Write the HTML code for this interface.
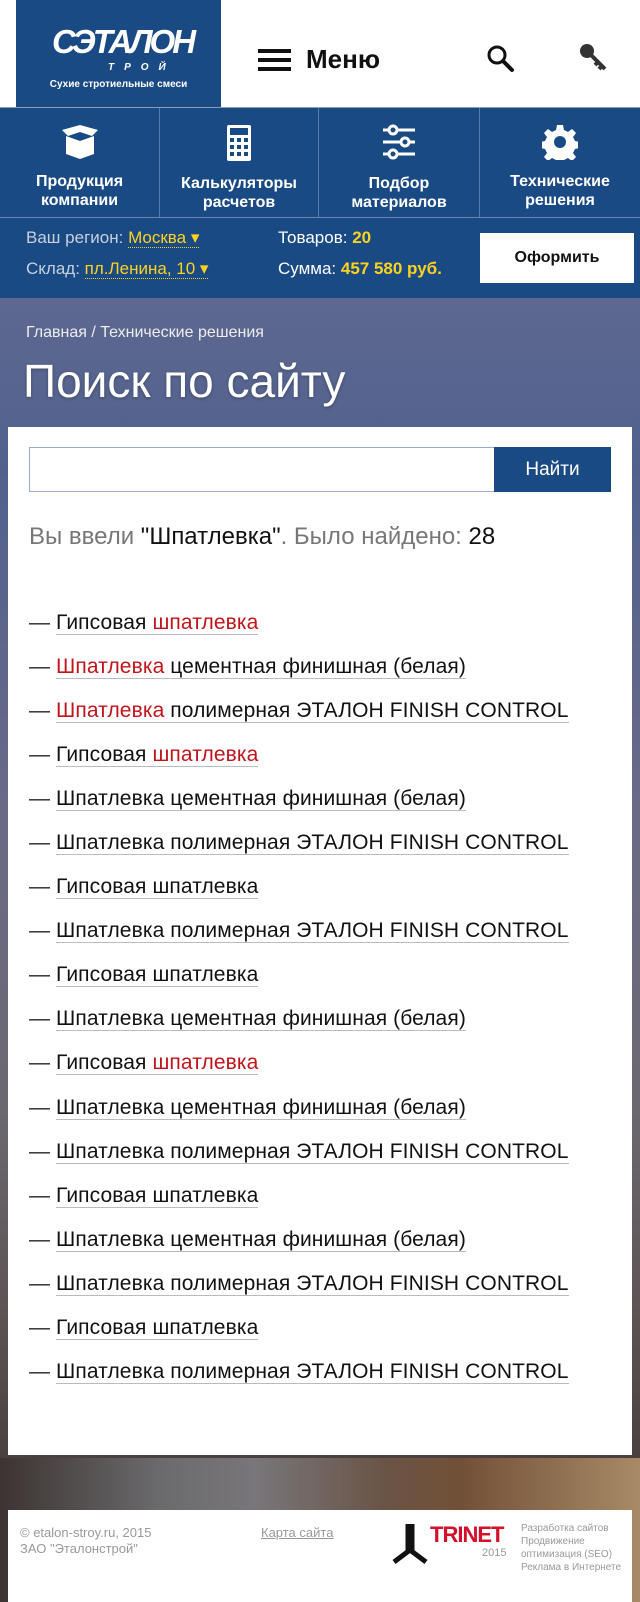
<!DOCTYPE html>
<html><head><meta charset="utf-8"><style>
*{margin:0;padding:0;box-sizing:border-box}
body{width:640px;height:1602px;font-family:"Liberation Sans",sans-serif;position:relative;overflow:hidden;
background:linear-gradient(90deg,#3c3432 0%,#6b6a6c 25%,#78767a 40%,#6a5446 60%,#725037 72%,#a88a66 100%)}
.bg{position:absolute;left:0;top:298px;width:640px;height:1160px;background:linear-gradient(180deg,#5d6890 0%,#51618e 15%,#6a6a86 45%,#6c6870 70%,#5a5050 90%,#4a4040 100%)}
.hdr{position:absolute;left:0;top:0;width:640px;height:107px;background:#fff}
.logo{position:absolute;left:16px;top:0;width:205px;height:107px;background:#1a4a84;color:#fff;text-align:center;overflow:hidden}
.abs{position:absolute}
.nav{position:absolute;left:0;top:107px;width:640px;height:110px;background:#1a4a84;border-top:1px solid #8a9ab8;display:flex}
.nav div{border-right:1px solid #5a7aa8;color:#fff;font-weight:bold;font-size:16px;text-align:center;line-height:19px;position:relative}
.nav svg{display:block;margin:16px auto 12px}
.info{position:absolute;left:0;top:217px;width:640px;height:81px;background:#1a4a84;border-top:1px solid #6a86b0;color:#fff;font-size:17px}
.y{color:#ffd21e;border-bottom:1px dotted #ffd21e}
.card{position:absolute;left:8px;top:427px;width:624px;height:1028px;background:#fff}
ul{list-style:none;position:absolute;left:29px;top:611px}
li{height:44.05px;font-size:21px;color:#222;white-space:nowrap;letter-spacing:0.1px}
li a{color:#111;text-decoration:none;border-bottom:1px solid #bbb}
.r{color:#c0141b}
.ft{position:absolute;left:8px;top:1510px;width:624px;height:92px;background:#fff;color:#999;font-size:13px}
</style></head><body>
<div class="bg"></div>
<div class="hdr">
<div class="logo">
<div class="abs" style="left:36px;top:24px;font-size:33px;font-weight:bold;font-style:italic;letter-spacing:-3px;line-height:36px">СЭТАЛОН</div>
<div class="abs" style="left:92px;top:62px;font-size:10px;font-style:italic;letter-spacing:10px;font-weight:bold">ТРОЙ</div>
<div class="abs" style="left:0;width:205px;top:79px;font-size:10px;font-weight:bold">Сухие стротиельные смеси</div>
</div>
<div class="abs" style="left:258px;top:49px;width:33px;height:4px;background:#111;box-shadow:0 9px 0 #111,0 18px 0 #111"></div>
<div class="abs" style="left:306px;top:44px;font-size:26px;font-weight:bold;color:#111">Меню</div>
<svg class="abs" style="left:486px;top:44px" width="30" height="30" viewBox="0 0 30 30"><circle cx="11" cy="11" r="8" fill="none" stroke="#111" stroke-width="3"/><path d="M17 17l9 9" stroke="#111" stroke-width="4" stroke-linecap="round"/></svg>
<svg class="abs" style="left:578px;top:42px" width="30" height="30" viewBox="0 0 30 30"><circle cx="9" cy="9" r="7" fill="#333"/><path d="M13 13l14 14M20 20l-3 3M24 24l-3 3" stroke="#333" stroke-width="4"/></svg>
</div>
<div class="nav">
<div style="width:160px"><svg width="44" height="36" viewBox="0 0 44 36"><path d="M4 6l18-5 18 5-6 6-12-4-12 4zM8 12l14 5v18L8 30zM36 12l-14 5v18l14-5z" fill="#fff"/></svg>Продукция<br>компании</div>
<div style="width:159px"><svg width="26" height="38" viewBox="0 0 26 38"><rect x="1" y="1" width="24" height="36" rx="2" fill="#fff"/><rect x="4" y="4" width="18" height="7" fill="#1a4a84"/><g fill="#1a4a84"><rect x="4" y="14" width="4" height="4"/><rect x="11" y="14" width="4" height="4"/><rect x="18" y="14" width="4" height="4"/><rect x="4" y="21" width="4" height="4"/><rect x="11" y="21" width="4" height="4"/><rect x="18" y="21" width="4" height="4"/><rect x="4" y="28" width="4" height="4"/><rect x="11" y="28" width="4" height="4"/><rect x="18" y="28" width="4" height="4"/></g></svg>Калькуляторы<br>расчетов</div>
<div style="width:161px"><svg width="36" height="36" viewBox="0 0 36 36" style="margin-bottom:14px"><g stroke="#fff" stroke-width="3"><path d="M2 6h32M2 18h32M2 30h32"/></g><g fill="#1a4a84" stroke="#fff" stroke-width="3"><circle cx="12" cy="6" r="4"/><circle cx="24" cy="18" r="4"/><circle cx="12" cy="30" r="4"/></g></svg>Подбор<br>материалов</div>
<div style="width:160px;border:none"><svg width="36" height="36" viewBox="0 0 36 36"><path d="M15 1h6l1 5 4 2 4-3 4 4-3 4 2 4 5 1v6l-5 1-2 4 3 4-4 4-4-3-4 2-1 5h-6l-1-5-4-2-4 3-4-4 3-4-2-4-5-1v-6l5-1 2-4-3-4 4-4 4 3 4-2z" fill="#fff"/><circle cx="18" cy="18" r="6" fill="#1a4a84"/></svg>Технические<br>решения</div>
</div>
<div class="info">
<div class="abs" style="left:26px;top:10px;color:#c8d0dc">Ваш регион: <span class="y">Москва ▾</span></div>
<div class="abs" style="left:26px;top:41px;color:#c8d0dc">Склад: <span class="y">пл.Ленина, 10 ▾</span></div>
<div class="abs" style="left:278px;top:10px">Товаров: <b style="color:#ffd21e">20</b></div>
<div class="abs" style="left:278px;top:41px">Сумма: <b style="color:#ffd21e">457 580 руб.</b></div>
<div class="abs" style="left:480px;top:15px;width:154px;height:50px;background:#fff;color:#111;font-weight:bold;text-align:center;line-height:50px;font-size:16px">Оформить</div>
</div>
<div class="abs" style="left:26px;top:324px;color:#eee;font-size:16px">Главная / Технические решения</div>
<div class="abs" style="left:23px;top:354px;color:#fff;font-size:46px;font-weight:300;text-shadow:0 1px 3px rgba(0,0,0,.3)">Поиск по сайту</div>
<div class="card"></div>
<div class="abs" style="left:29px;top:447px;width:466px;height:45px;border:1px solid #9aaccc;background:#fff"></div>
<div class="abs" style="left:494px;top:447px;width:117px;height:45px;background:#1a4a84;color:#fff;font-size:19px;text-align:center;line-height:45px">Найти</div>
<div class="abs" style="left:29px;top:523px;font-size:24px;color:#777">Вы ввели <span style="color:#111">"Шпатлевка"</span>. Было найдено: <span style="color:#111">28</span></div>
<ul>
<li>— <a>Гипсовая <span class="r">шпатлевка</span></a></li>
<li>— <a><span class="r">Шпатлевка</span> цементная финишная (белая)</a></li>
<li>— <a><span class="r">Шпатлевка</span> полимерная ЭТАЛОН FINISH CONTROL</a></li>
<li>— <a>Гипсовая <span class="r">шпатлевка</span></a></li>
<li>— <a>Шпатлевка цементная финишная (белая)</a></li>
<li>— <a>Шпатлевка полимерная ЭТАЛОН FINISH CONTROL</a></li>
<li>— <a>Гипсовая шпатлевка</a></li>
<li>— <a>Шпатлевка полимерная ЭТАЛОН FINISH CONTROL</a></li>
<li>— <a>Гипсовая шпатлевка</a></li>
<li>— <a>Шпатлевка цементная финишная (белая)</a></li>
<li>— <a>Гипсовая <span class="r">шпатлевка</span></a></li>
<li>— <a>Шпатлевка цементная финишная (белая)</a></li>
<li>— <a>Шпатлевка полимерная ЭТАЛОН FINISH CONTROL</a></li>
<li>— <a>Гипсовая шпатлевка</a></li>
<li>— <a>Шпатлевка цементная финишная (белая)</a></li>
<li>— <a>Шпатлевка полимерная ЭТАЛОН FINISH CONTROL</a></li>
<li>— <a>Гипсовая шпатлевка</a></li>
<li>— <a>Шпатлевка полимерная ЭТАЛОН FINISH CONTROL</a></li>
</ul>
<div class="ft">
<div class="abs" style="left:12px;top:15px;line-height:16px">© etalon-stroy.ru, 2015<br>ЗАО "Эталонстрой"</div>
<div class="abs" style="left:253px;top:15px;text-decoration:underline">Карта сайта</div>
<svg class="abs" style="left:382px;top:14px" width="40" height="42" viewBox="0 0 40 42"><path d="M18 2h4v24h-4z M20 26L4 38M20 26l16 12" stroke="#111" stroke-width="5" fill="none"/></svg>
<div class="abs" style="left:422px;top:12px;color:#d4102a;font-size:22px;font-weight:bold;letter-spacing:-1px">TRINET</div>
<div class="abs" style="left:474px;top:37px;font-size:11px">2015</div>
<div class="abs" style="left:513px;top:12px;font-size:10px;line-height:13px">Разработка сайтов<br>Продвижение<br>оптимизация (SEO)<br>Реклама в Интернете</div>
</div>
</body></html>
